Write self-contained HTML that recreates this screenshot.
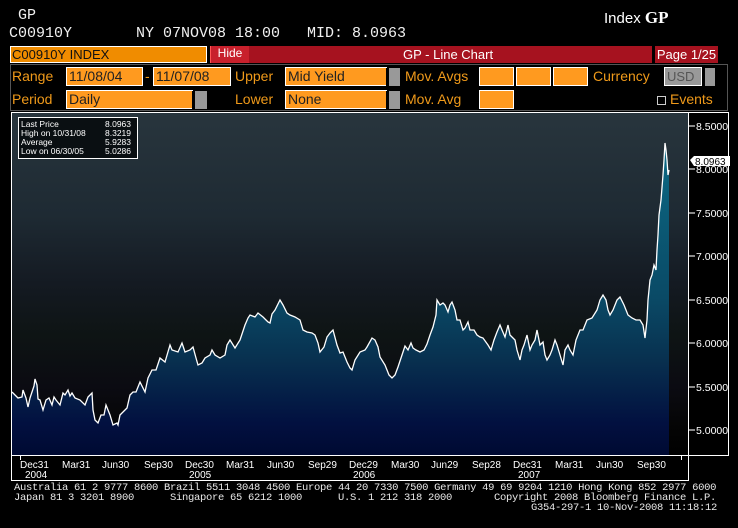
<!DOCTYPE html>
<html><head><meta charset="utf-8"><style>
*{margin:0;padding:0;box-sizing:border-box}
body{width:738px;height:528px;background:#000;position:relative;overflow:hidden;font-family:"Liberation Sans",sans-serif;color:#fff}
.a{position:absolute;white-space:nowrap}
.h{font-size:15px;color:#f0f0f0;font-family:"Liberation Mono",monospace;white-space:pre}
.lbl{font-size:14px;color:#f09a1a}
.in{position:absolute;background:#ff9a1f;border:1px solid #fff;color:#222;font-size:14px;line-height:17px;padding-left:2px;height:19px}
.gr{position:absolute;background:#999}
.ft{font-size:10.5px;color:#e8e8e8;font-family:"Liberation Mono",monospace;letter-spacing:-0.3px}
</style></head><body>
<div class="a h" style="left:18px;top:7px">GP</div>
<div class="a h" style="left:9px;top:25px">C00910Y</div>
<div class="a h" style="left:136px;top:25px">NY 07NOV08 18:00   MID: 8.0963</div>
<div class="a" style="left:604px;top:8px;font-size:15px">Index <b style="font-family:'Liberation Serif',serif;font-size:17px">GP</b></div>

<div class="a" style="left:10px;top:46px;width:197px;height:17px;background:#f08c00;border:1px solid #fff;color:#111;font-size:13px;line-height:15px;padding-left:1px">C00910Y INDEX</div>
<div class="a" style="left:210px;top:46px;width:39px;height:17px;background:#c8202c;border-left:1px solid #f55;color:#fff;font-size:12px;line-height:14px;text-align:center">Hide</div>
<div class="a" style="left:249px;top:46px;width:403px;height:17px;background:#a6121f;color:#fff;font-size:13px;line-height:17px;padding-left:154px">GP - Line Chart</div>
<div class="a" style="left:655px;top:46px;width:63px;height:17px;background:#a6121f;color:#fff;font-size:13px;line-height:17px;text-align:center">Page 1/25</div>
<div class="a" style="left:10px;top:64px;width:718px;height:47px;border:1px solid #555"></div>

<div class="a lbl" style="left:12px;top:68px">Range</div>
<div class="in" style="left:66px;top:67px;width:77px">11/08/04</div>
<div class="a lbl" style="left:145px;top:68px">-</div>
<div class="in" style="left:153px;top:67px;width:78px">11/07/08</div>
<div class="a lbl" style="left:235px;top:68px">Upper</div>
<div class="in" style="left:285px;top:67px;width:102px">Mid Yield</div>
<div class="gr" style="left:386px;top:68px;width:14px;height:18px;border-left:3px solid #000"></div>
<div class="a lbl" style="left:405px;top:68px">Mov. Avgs</div>
<div class="in" style="left:479px;top:67px;width:35px"></div>
<div class="in" style="left:516px;top:67px;width:35px"></div>
<div class="in" style="left:553px;top:67px;width:35px"></div>
<div class="a lbl" style="left:593px;top:68px">Currency</div>
<div class="a" style="left:664px;top:67px;width:38px;height:19px;background:#999;border:1px solid #fff;color:#555;font-size:13px;line-height:17px;padding-left:2px">USD</div>
<div class="gr" style="left:702px;top:68px;width:13px;height:18px;border-left:3px solid #000"></div>

<div class="a lbl" style="left:12px;top:91px">Period</div>
<div class="in" style="left:66px;top:90px;width:127px">Daily</div>
<div class="gr" style="left:192px;top:91px;width:15px;height:18px;border-left:3px solid #000"></div>
<div class="a lbl" style="left:235px;top:91px">Lower</div>
<div class="in" style="left:285px;top:90px;width:102px">None</div>
<div class="gr" style="left:386px;top:91px;width:14px;height:18px;border-left:3px solid #000"></div>
<div class="a lbl" style="left:405px;top:91px">Mov. Avg</div>
<div class="in" style="left:479px;top:90px;width:35px"></div>
<div class="a" style="left:657px;top:96px;width:9px;height:9px;border:1px solid #ccc"></div>
<div class="a lbl" style="left:670px;top:91px">Events</div>

<svg class="a" style="left:0;top:0" width="738" height="528">
<defs>
<linearGradient id="bg" x1="0" y1="113" x2="0" y2="455" gradientUnits="userSpaceOnUse">
<stop offset="0" stop-color="#28353d"/><stop offset="0.3" stop-color="#1e2a33"/><stop offset="0.5" stop-color="#141a22"/><stop offset="0.65" stop-color="#0e1414"/><stop offset="0.8" stop-color="#0b0b12"/><stop offset="0.92" stop-color="#050505"/><stop offset="1" stop-color="#000"/></linearGradient>
<linearGradient id="fg" x1="0" y1="140" x2="0" y2="455" gradientUnits="userSpaceOnUse">
<stop offset="0" stop-color="#0c6a85"/><stop offset="0.5" stop-color="#0a4a66"/><stop offset="0.7" stop-color="#08304f"/><stop offset="0.9" stop-color="#021040"/><stop offset="1" stop-color="#000a32"/></linearGradient>
</defs>
<rect x="12" y="113" width="676" height="342" fill="url(#bg)"/>
<line x1="11.5" y1="112" x2="11.5" y2="481" stroke="#fff"/>
<line x1="11" y1="112.5" x2="729" y2="112.5" stroke="#fff"/>
<line x1="728.5" y1="112" x2="728.5" y2="456" stroke="#fff"/>
<line x1="688.5" y1="113" x2="688.5" y2="481" stroke="#fff"/>
<line x1="688" y1="455.5" x2="729" y2="455.5" stroke="#fff"/>
<line x1="11" y1="455.5" x2="689" y2="455.5" stroke="#fff"/>
<line x1="11" y1="480.5" x2="689" y2="480.5" stroke="#fff"/>
<polygon fill="url(#fg)" points="12,455 12,392 15,395 18,398 22,397 23,390 26,398 28,407 30,398 34,386 35,379 37,385 38,399 40,400 43,410 46,400 49,398 52,405 54,397 56,400 60,405 63,393 65,395 68,390 70,396 72,393 75,398 80,400 85,405 88,397 92,393 93,410 95,420 98,423 101,415 104,415 106,405 110,415 113,425 117,423 118,425 120,415 125,410 127,408 130,395 133,392 136,392 140,382 145,392 148,378 152,370 156,370 158,364 160,358 165,362 170,345 172,350 178,352 182,343 185,352 190,350 193,347 196,358 198,365 202,363 205,358 210,355 212,350 215,355 220,358 225,355 227,345 230,340 235,348 240,340 245,325 248,318 250,315 255,317 258,313 263,317 266,320 268,322 270,323 272,314 275,310 280,300 283,305 287,313 290,315 295,317 300,320 303,330 307,332 312,333 315,335 318,343 320,352 324,347 327,337 330,333 333,330 337,345 340,353 343,352 347,362 350,368 352,370 355,360 360,352 365,350 367,347 372,338 375,340 378,347 380,357 385,365 389,375 392,378 395,375 398,367 402,355 405,346 408,350 411,343 413,348 416,350 420,352 424,350 427,344 430,335 433,327 436,315 437,300 440,305 443,303 445,305 448,312 450,305 452,302 455,310 457,320 460,320 463,330 465,328 468,322 470,330 474,330 477,335 480,337 483,338 488,345 491,350 494,340 497,332 500,325 502,330 505,337 508,325 510,335 515,340 517,350 520,360 522,350 524,345 527,335 528,340 530,350 532,345 535,340 537,330 540,345 543,342 545,355 547,360 550,355 552,350 555,340 557,345 560,355 563,365 565,350 568,345 570,350 573,355 576,340 580,330 583,330 587,320 592,318 597,310 600,300 603,295 606,300 608,310 610,315 613,310 617,300 620,297 624,305 628,315 632,318 636,320 640,320 643,325 645,338 647,320 648,300 650,280 652,275 654,265 656,270 657,250 658,235 659,215 661,200 663,175 664,160 665,143 666,150 667,160 668,175 669,170 669,455"/>
<polyline fill="none" stroke="#fff" stroke-width="1.3" points="12,392 15,395 18,398 22,397 23,390 26,398 28,407 30,398 34,386 35,379 37,385 38,399 40,400 43,410 46,400 49,398 52,405 54,397 56,400 60,405 63,393 65,395 68,390 70,396 72,393 75,398 80,400 85,405 88,397 92,393 93,410 95,420 98,423 101,415 104,415 106,405 110,415 113,425 117,423 118,425 120,415 125,410 127,408 130,395 133,392 136,392 140,382 145,392 148,378 152,370 156,370 158,364 160,358 165,362 170,345 172,350 178,352 182,343 185,352 190,350 193,347 196,358 198,365 202,363 205,358 210,355 212,350 215,355 220,358 225,355 227,345 230,340 235,348 240,340 245,325 248,318 250,315 255,317 258,313 263,317 266,320 268,322 270,323 272,314 275,310 280,300 283,305 287,313 290,315 295,317 300,320 303,330 307,332 312,333 315,335 318,343 320,352 324,347 327,337 330,333 333,330 337,345 340,353 343,352 347,362 350,368 352,370 355,360 360,352 365,350 367,347 372,338 375,340 378,347 380,357 385,365 389,375 392,378 395,375 398,367 402,355 405,346 408,350 411,343 413,348 416,350 420,352 424,350 427,344 430,335 433,327 436,315 437,300 440,305 443,303 445,305 448,312 450,305 452,302 455,310 457,320 460,320 463,330 465,328 468,322 470,330 474,330 477,335 480,337 483,338 488,345 491,350 494,340 497,332 500,325 502,330 505,337 508,325 510,335 515,340 517,350 520,360 522,350 524,345 527,335 528,340 530,350 532,345 535,340 537,330 540,345 543,342 545,355 547,360 550,355 552,350 555,340 557,345 560,355 563,365 565,350 568,345 570,350 573,355 576,340 580,330 583,330 587,320 592,318 597,310 600,300 603,295 606,300 608,310 610,315 613,310 617,300 620,297 624,305 628,315 632,318 636,320 640,320 643,325 645,338 647,320 648,300 650,280 652,275 654,265 656,270 657,250 658,235 659,215 661,200 663,175 664,160 665,143 666,150 667,160 668,175 669,170"/>
<g fill="#888">
<rect x="689" y="125" width="6" height="2"/><rect x="689" y="168" width="6" height="2"/><rect x="689" y="212" width="6" height="2"/><rect x="689" y="255" width="6" height="2"/><rect x="689" y="299" width="6" height="2"/><rect x="689" y="342" width="6" height="2"/><rect x="689" y="386" width="6" height="2"/><rect x="689" y="429" width="6" height="2"/>
</g>
<g fill="#fff" font-family="Liberation Sans,sans-serif" font-size="10.5">
<text x="696" y="130">8.5000</text><text x="696" y="173">8.0000</text><text x="696" y="217">7.5000</text><text x="696" y="260">7.0000</text><text x="696" y="304">6.5000</text><text x="696" y="347">6.0000</text><text x="696" y="391">5.5000</text><text x="696" y="434">5.0000</text>
</g>
<polygon points="690,160 694,156 730,156 730,166 694,166" fill="#fff"/>
<text x="695" y="165" font-size="10" fill="#000" font-family="Liberation Sans,sans-serif">8.0963</text>
<rect x="18.5" y="117.5" width="119" height="41" fill="#0a0f12" stroke="#fff"/>
<g fill="#fff" font-family="Liberation Sans,sans-serif" font-size="8.5">
<text x="21" y="127">Last Price</text><text x="105" y="127">8.0963</text>
<text x="21" y="136">High on 10/31/08</text><text x="105" y="136">8.3219</text>
<text x="21" y="145">Average</text><text x="105" y="145">5.9283</text>
<text x="21" y="154">Low on 06/30/05</text><text x="105" y="154">5.0286</text>
</g>
<g fill="#fff" font-family="Liberation Sans,sans-serif" font-size="10">
<text x="20" y="468">Dec31</text><text x="62" y="468">Mar31</text><text x="102" y="468">Jun30</text><text x="144" y="468">Sep30</text><text x="185" y="468">Dec30</text><text x="226" y="468">Mar31</text><text x="267" y="468">Jun30</text><text x="308" y="468">Sep29</text><text x="349" y="468">Dec29</text><text x="391" y="468">Mar30</text><text x="431" y="468">Jun29</text><text x="472" y="468">Sep28</text><text x="513" y="468">Dec31</text><text x="555" y="468">Mar31</text><text x="596" y="468">Jun30</text><text x="637" y="468">Sep30</text>
<text x="25" y="478">2004</text><text x="189" y="478">2005</text><text x="353" y="478">2006</text><text x="518" y="478">2007</text>
</g>
<g stroke="#fff"><line x1="20.5" y1="456" x2="20.5" y2="460"/><line x1="681.5" y1="456" x2="681.5" y2="460"/></g>
</svg>

<div class="a ft" style="left:14px;top:482px">Australia 61 2 9777 8600 Brazil 5511 3048 4500 Europe 44 20 7330 7500 Germany 49 69 9204 1210 Hong Kong 852 2977 6000</div>
<div class="a ft" style="left:14px;top:492px">Japan 81 3 3201 8900</div>
<div class="a ft" style="left:170px;top:492px">Singapore 65 6212 1000</div>
<div class="a ft" style="left:338px;top:492px">U.S. 1 212 318 2000</div>
<div class="a ft" style="left:494px;top:492px">Copyright 2008 Bloomberg Finance L.P.</div>
<div class="a ft" style="left:531px;top:502px">G354-297-1 10-Nov-2008 11:18:12</div>
</body></html>
